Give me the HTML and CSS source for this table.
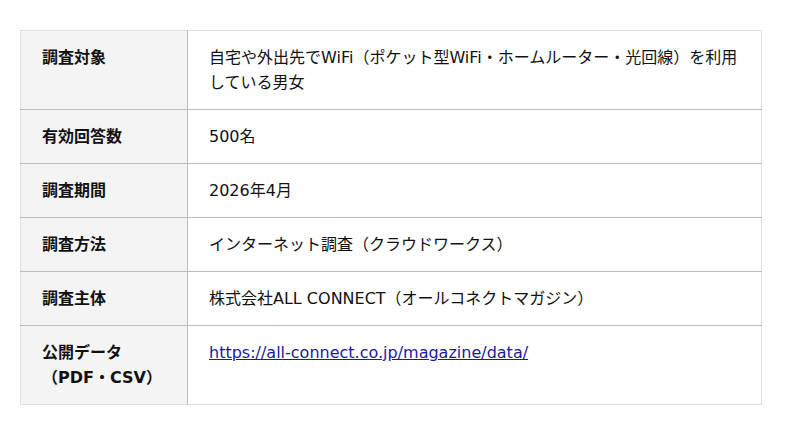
FILE: index.html
```html
<!DOCTYPE html>
<html lang="ja">
<head>
<meta charset="utf-8">
<link rel="stylesheet" href="styles.css">
</head>
<body>
<div class="wrap">
<table class="survey">
<tbody>
<tr><th>調査対象</th><td>自宅や外出先でWiFi（ポケット型WiFi・ホームルーター・光回線）を利用している男女</td></tr>
<tr><th>有効回答数</th><td>500名</td></tr>
<tr><th>調査期間</th><td>2026年4月</td></tr>
<tr><th>調査方法</th><td>インターネット調査（クラウドワークス）</td></tr>
<tr><th>調査主体</th><td>株式会社ALL CONNECT（オールコネクトマガジン）</td></tr>
<tr><th>公開データ<br>（PDF・CSV）</th><td><a href="#">https://all-connect.co.jp/magazine/data/</a></td></tr>
</tbody>
</table>
</div>
</body>
</html>
```
FILE: styles.css
```css
html, body {
  margin: 0;
  padding: 0;
  background: #fff;
}
body {
  font-family: "DejaVu Sans", "Noto Sans CJK JP", sans-serif;
  font-size: 16px;
  color: #111;
}
.wrap {
  padding: 30px 38px 30px 20px;
}
.survey {
  width: 742px;
  border-collapse: collapse;
  border: 1px solid #e0e0e0;
}
.survey th,
.survey td {
  text-align: left;
  vertical-align: top;
  padding: 14px 20px 14px 21px;
  line-height: 25px;
  border-top: 1px solid #bdbdbd;
}
.survey tr:first-child th,
.survey tr:first-child td {
  border-top: 1px solid #e0e0e0;
}
.survey th {
  width: 125px;
  background: #f4f4f4;
  font-weight: bold;
  border-right: 1px solid #bdbdbd;
}
.survey a {
  color: #1a0dab;
  color: #1a1a9a;
}
```
